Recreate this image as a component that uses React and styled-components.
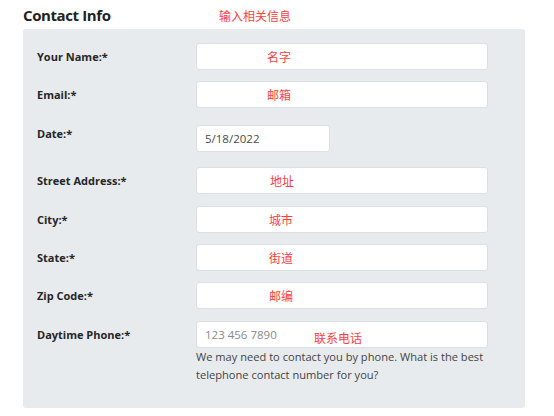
import React from "react";
import styled, { createGlobalStyle } from "styled-components";

const Global = createGlobalStyle`
  html, body { margin: 0; padding: 0; background: #ffffff; }
  body { font-family: "Open Sans", "Noto Sans CJK SC", sans-serif; }
  * { box-sizing: border-box; }
`;

const Page = styled.div`
  width: 554px;
  height: 416px;
  padding: 5px 0 0 23px;
  overflow: hidden;
`;

const Header = styled.div`
  display: flex;
  align-items: center;
  height: 20px;
  margin-bottom: 4px;
`;

const Title = styled.h2`
  margin: 0;
  width: 196px;
  font-family: "Open Sans", sans-serif;
  font-size: 15px;
  letter-spacing: -0.4px;
  font-weight: 700;
  color: #222;
`;

const Note = styled.span`
  font-family: "Noto Sans CJK SC", sans-serif;
  font-size: 12px;
  color: #ff3d3d;
`;

const Panel = styled.div`
  width: 502px;
  background: #e8ebee;
  border-radius: 3px;
  padding: 14px 37px 24px 14px;
  display: flex;
  flex-direction: column;
`;

const Row = styled.div`
  display: grid;
  grid-template-columns: 159px 292px;
  margin-top: ${(p) => p.$gap}px;
`;

const Label = styled.label`
  padding-top: ${(p) => (p.$top ? 1 : 6)}px;
  font-size: 11px;
  font-weight: 700;
  color: #262626;
  line-height: 15px;
`;

const Field = styled.div`
  position: relative;
  width: ${(p) => p.$w || 292}px;
  height: 27px;
  background: #fff;
  border: 1px solid #dcdfe3;
  border-radius: 3px;
  display: flex;
  align-items: center;
  padding-left: 8px;
  font-size: 11.5px;
  color: ${(p) => (p.$ph ? "#8a8a8a" : "#4a4a4a")};
`;

const Hint = styled.span`
  position: absolute;
  left: ${(p) => p.$x}px;
  top: ${(p) => p.$y || 5}px;
  font-family: "Noto Sans CJK SC", sans-serif;
  font-size: 12px;
  line-height: 16px;
  color: #ff3d3d;
`;

const Help = styled.p`
  grid-column: 2;
  margin: 0;
  width: 296px;
  font-size: 11.1px;
  line-height: 18px;
  color: #444;
`;

const rows = [
  { label: "Your Name:*", hint: "名字", hx: 70, gap: 0 },
  { label: "Email:*", hint: "邮箱", hx: 70, gap: 11 },
  { label: "Date:*", value: "5/18/2022", w: 134, gap: 17, top: true },
  { label: "Street Address:*", hint: "地址", hx: 73, gap: 15 },
  { label: "City:*", hint: "城市", hx: 72, gap: 12 },
  { label: "State:*", hint: "街道", hx: 72, gap: 11 },
  { label: "Zip Code:*", hint: "邮编", hx: 72, gap: 11 },
];

export default function App() {
  return (
    <>
      <Global />
      <Page>
        <Header>
          <Title>Contact Info</Title>
          <Note>输入相关信息</Note>
        </Header>
        <Panel>
          {rows.map((r) => (
            <Row key={r.label} $gap={r.gap}>
              <Label $top={r.top}>{r.label}</Label>
              <Field $w={r.w}>
                {r.value}
                {r.hint && <Hint $x={r.hx}>{r.hint}</Hint>}
              </Field>
            </Row>
          ))}
          <Row $gap={12}>
            <Label>Daytime Phone:*</Label>
            <Field $ph>
              123 456 7890
              <Hint $x={117} $y={8}>联系电话</Hint>
            </Field>
            <Help>
              We may need to contact you by phone. What is the best telephone
              contact number for you?
            </Help>
          </Row>
        </Panel>
      </Page>
    </>
  );
}
